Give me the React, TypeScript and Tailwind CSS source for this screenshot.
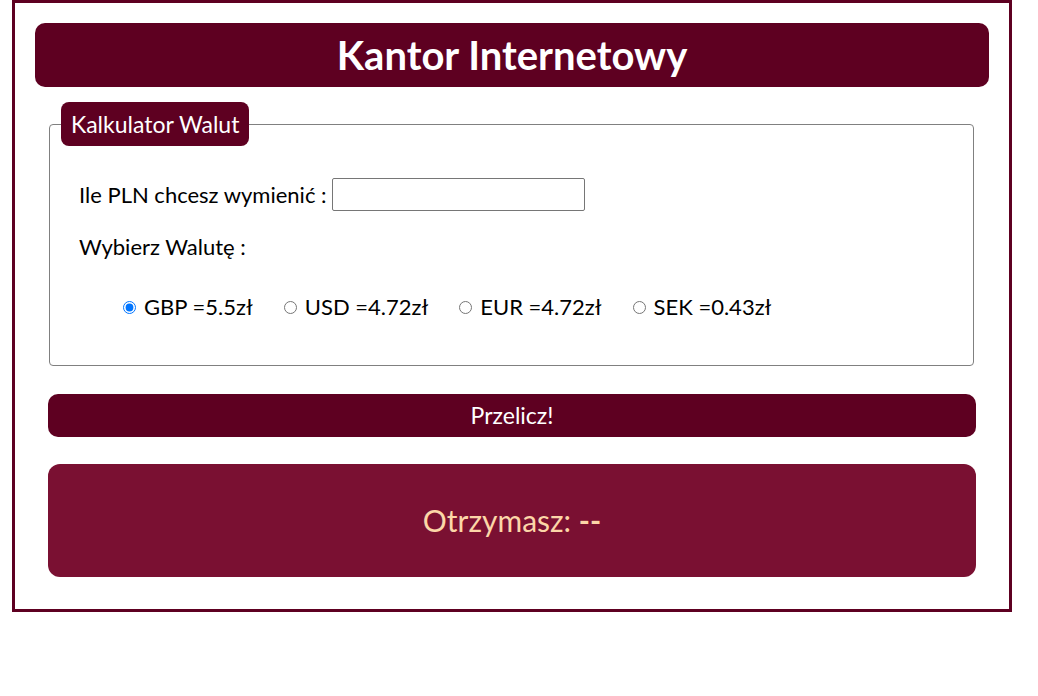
import React from "react";

const rates = [
  { code: "GBP", rate: "5.5" },
  { code: "USD", rate: "4.72" },
  { code: "EUR", rate: "4.72" },
  { code: "SEK", rate: "0.43" },
];

const App: React.FC = () => {
  return (
    <div className="ml-3 w-[1000px] border-[3px] border-[#5e0021] bg-white px-5 pt-5 pb-8 font-['Lato',sans-serif] text-black">
      <div className="flex h-16 items-center justify-center rounded-[10px] bg-[#5e0021]">
        <h1 className="text-[40px] font-bold text-white">Kantor Internetowy</h1>
      </div>

      <fieldset className="mt-[15px] ml-[14px] mr-[15px] rounded-[4px] border border-[#808080]">
        <legend className="ml-[11px] rounded-[8px] bg-[#5e0021] px-[10px] py-[8px] text-[23px] leading-[28px] text-white">
          Kalkulator Walut
        </legend>
        <div className="pt-[32px] pb-[44px] pl-[29px] text-[22px] leading-[28px]">
          <div className="flex items-center">
            <span>Ile PLN chcesz wymienić :</span>
            <input
              type="text"
              className="ml-[5px] h-[33px] w-[253px] rounded-[2px] border border-[#767676] bg-white"
            />
          </div>
          <p className="mt-[22px]">Wybierz Walutę :</p>
          <div className="mt-[32px] flex items-center gap-[31px] pl-[44px]">
            {rates.map((r, i) => (
              <label key={r.code} className="flex items-center">
                <input
                  type="radio"
                  name="waluta"
                  defaultChecked={i === 0}
                  className="m-0 mr-[8px] h-[13px] w-[13px]"
                />
                {r.code} ={r.rate}zł
              </label>
            ))}
          </div>
        </div>
      </fieldset>

      <button className="mt-[28px] ml-[13px] mr-[13px] block h-[43px] w-[928px] rounded-[10px] bg-[#5e0021] text-[23px] text-white">
        Przelicz!
      </button>

      <div className="mt-[27px] ml-[13px] flex h-[113px] w-[928px] items-center justify-center rounded-[12px] bg-[#7a1032] text-[30px] text-[#fcd6a8]">
        Otrzymasz:&nbsp;<span className="font-bold">--</span>
      </div>
    </div>
  );
};

export default App;
